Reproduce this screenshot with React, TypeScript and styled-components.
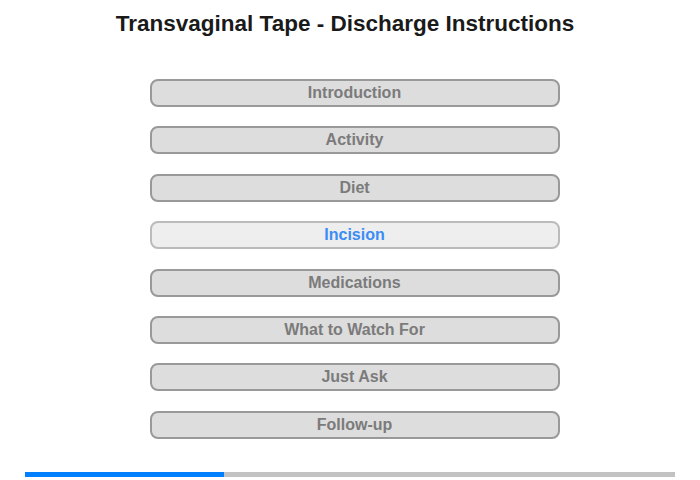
import { createGlobalStyle } from "styled-components";
import styled from "styled-components";

const GlobalStyle = createGlobalStyle`
    html, body {
        margin: 0;
        padding: 0;
        background: #ffffff;
        font-family: "Liberation Sans", Arial, sans-serif;
    }
`

const Page = styled.div`
    width: 700px;
    height: 480px;
    display: flex;
    flex-direction: column;
    align-items: center;
    box-sizing: border-box;
`

const Title = styled.h1`
    margin: 11px 10px 0 0;
    font-size: 22.5px;
    line-height: 26px;
    font-weight: bold;
    color: #1a1a1a;
    text-align: center;
`

const Menu = styled.div`
    margin-top: 42px;
    margin-left: 9px;
    display: flex;
    flex-direction: column;
    gap: 19.4px;
`

const MenuButton = styled.div<{ $active?: boolean }>`
    width: 410px;
    height: 28px;
    box-sizing: border-box;
    border: 2px solid ${(p) => (p.$active ? "#bbbbbb" : "#999999")};
    border-radius: 8px;
    background: ${(p) => (p.$active ? "#eeeeee" : "#dddddd")};
    color: ${(p) => (p.$active ? "#3b8cf5" : "#7b7b7b")};
    font-size: 16px;
    font-weight: bold;
    display: flex;
    align-items: center;
    justify-content: center;
`

const Progress = styled.div`
    margin-top: auto;
    margin-bottom: 3px;
    width: 650px;
    height: 5px;
    background: #c2c2c2;
    display: flex;
`

const ProgressFill = styled.div`
    height: 100%;
    background: #0080ff;
`

const items = [
    "Introduction",
    "Activity",
    "Diet",
    "Incision",
    "Medications",
    "What to Watch For",
    "Just Ask",
    "Follow-up",
];

const App = () => {
    const active = 3;
    const progress = 199 / 650;

    return (
        <>
            <GlobalStyle />
            <Page>
                <Title>Transvaginal Tape - Discharge Instructions</Title>
                <Menu>
                    {items.map((item, i) => (
                        <MenuButton key={item} $active={i === active}>
                            {item}
                        </MenuButton>
                    ))}
                </Menu>
                <Progress>
                    <ProgressFill style={{ width: `${progress * 100}%` }} />
                </Progress>
            </Page>
        </>
    );
};

export default App;
